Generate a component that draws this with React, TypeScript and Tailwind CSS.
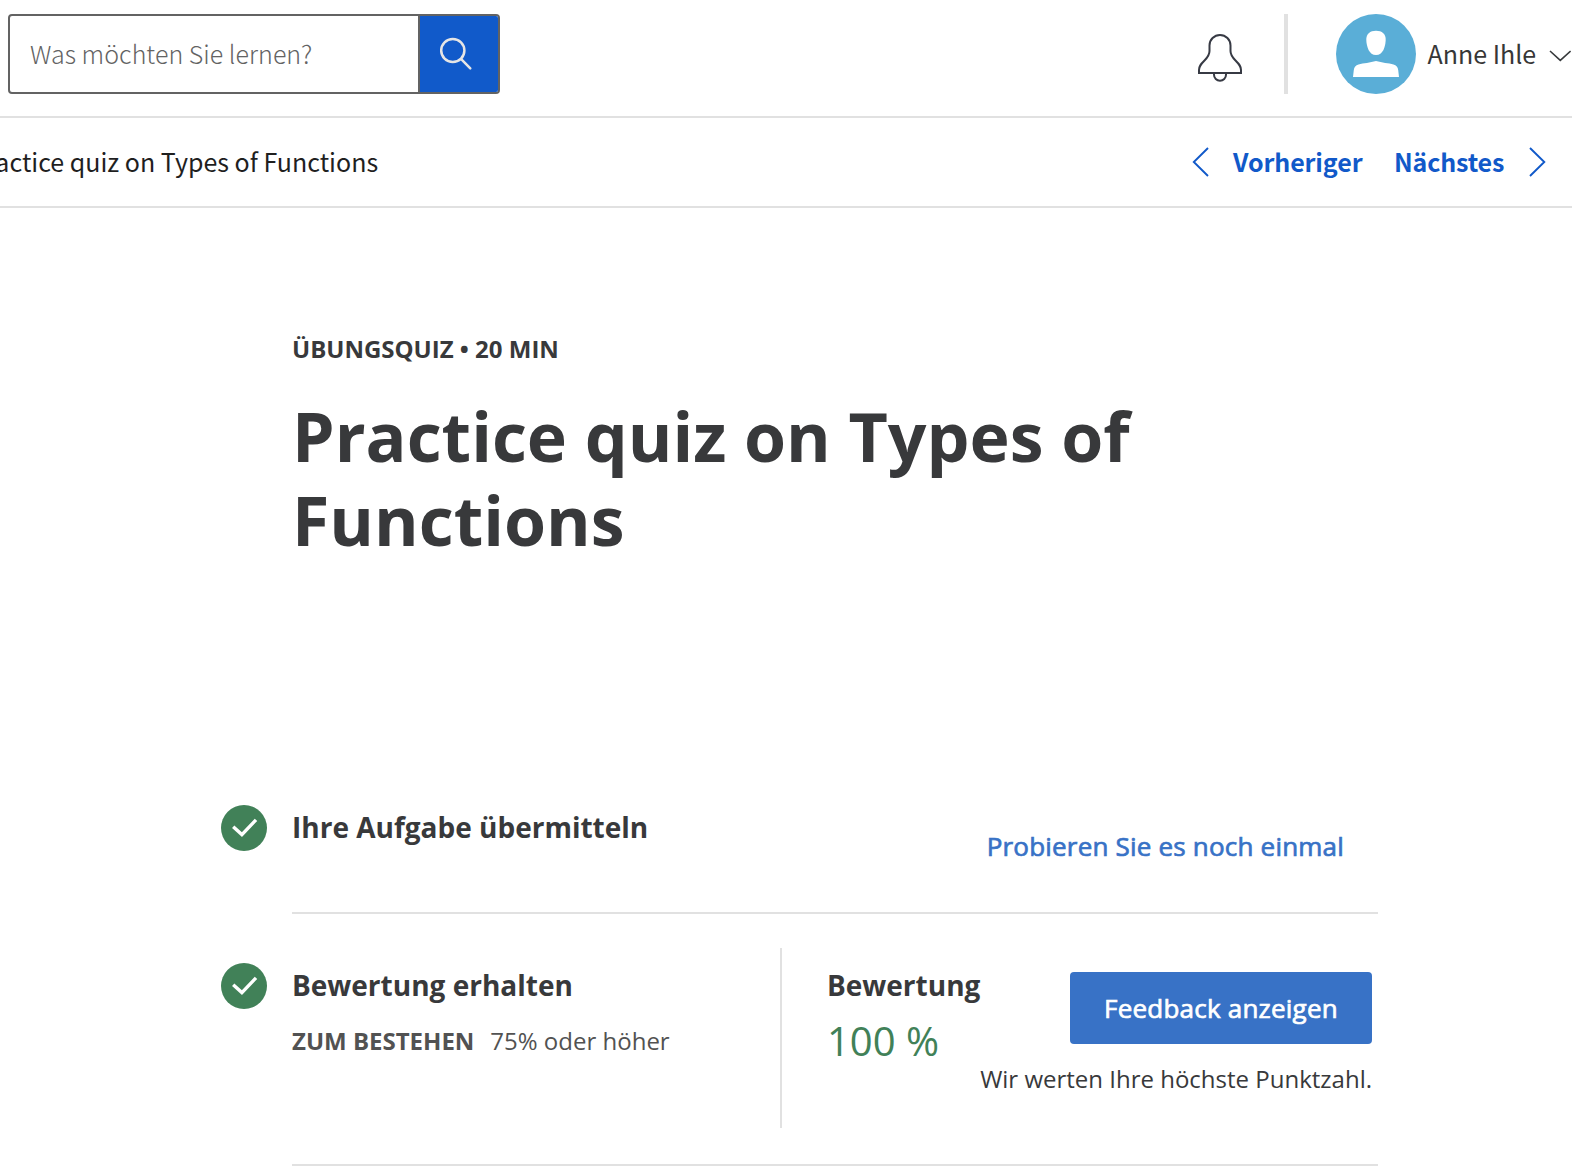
import React from "react";

const sans = "font-['Noto_Sans_CJK_SC',sans-serif]";

function SearchIcon() {
  return (
    <svg width="34" height="34" viewBox="0 0 34 34" fill="none" stroke="#e5e5e5" strokeWidth="2.5">
      <circle cx="13.8" cy="13.5" r="11.6" />
      <path d="M22.2 22.2L31.3 31.4" strokeLinecap="round" />
    </svg>
  );
}

function BellIcon() {
  return (
    <svg width="44" height="48" viewBox="0 0 44 48" fill="none" stroke="#373a44" strokeWidth="2">
      <path d="M1 39V36C1 32 3 30 6.5 26.5C10 23 11.5 21 11.5 17V11.5A10.5 10.5 0 0 1 32.5 11.5V17C32.5 21 34 23 37.5 26.5C41 30 43 32 43 36V39Z" />
      <path d="M16 39V40.8A6 6 0 0 0 28 40.8V39" />
    </svg>
  );
}

function Avatar() {
  return (
    <svg width="80" height="80" viewBox="0 0 80 80" className="shrink-0">
      <circle cx="40" cy="40" r="40" fill="#5aaed7" />
      <path
        fill="#fff"
        d="M40 16.7C46 16.7 50 20 49.7 26C49.3 33 47 41 40 41C33 41 30.7 33 30.3 26C30 20 34 16.7 40 16.7Z"
      />
      <path
        fill="#fff"
        d="M17 63L17.8 56Q18.3 51.6 22.5 50.4C27.5 49.2 34 48.7 40 47C46 48.7 52.5 49.2 57.5 50.4Q61.7 51.6 62.2 56L63 63Z"
      />
    </svg>
  );
}

function StatusCheck() {
  return (
    <svg width="46" height="46" viewBox="0 0 46 46" className="shrink-0">
      <circle cx="23" cy="23" r="23" fill="#418158" />
      <path d="M12.2 21.8L20.9 29.6L35 14.8" fill="none" stroke="#fff" strokeWidth="3.4" />
    </svg>
  );
}

function Header() {
  return (
    <header className="flex h-[118px] items-start border-b-2 border-[#e1e1e1] pt-3.5 pl-2">
      <div className="flex h-20 w-[492px] overflow-hidden rounded-[4px] border-2 border-[#636363]">
        <div className={`${sans} flex flex-1 items-center pb-0.5 pl-5 text-[25px] leading-9 font-light tracking-[0.04px] text-[#636363]`}>
          Was möchten Sie lernen?
        </div>
        <button className="flex w-20 items-center justify-center border-l-2 border-[#636363] bg-[#115aca] pr-1.5">
          <SearchIcon />
        </button>
      </div>
      <div className="ml-[698px] pt-5">
        <BellIcon />
      </div>
      <div className="ml-[42px] h-20 w-1 bg-[#e1e1e1]" />
      <div className="ml-12 flex h-20 items-center">
        <Avatar />
        <span className={`${sans} ml-[11.5px] pb-0.5 text-[25px] leading-9 whitespace-nowrap text-[#373737]`}>Anne Ihle</span>
        <svg width="22" height="12" viewBox="0 0 22 12" className="mt-1 ml-[12.5px] shrink-0" fill="none" stroke="#373a3c" strokeWidth="1.6">
          <path d="M1 1L11.3 10.3L21.6 1" />
        </svg>
      </div>
    </header>
  );
}

function ItemNav() {
  return (
    <nav className={`${sans} flex h-[90px] items-center border-b-2 border-[#e1e1e1] text-[25px] leading-9`}>
      <div className="-ml-[29.5px] w-[1221.5px] pb-0.5 whitespace-nowrap text-[#1f1f1f]">
        Practice quiz on Types of Functions
      </div>
      <a className="flex items-center font-bold text-[#1159c9]">
        <svg width="17" height="30" viewBox="0 0 17 30" fill="none" stroke="currentColor" strokeWidth="1.9">
          <path d="M16 1L1.8 15L16 29" />
        </svg>
        <span className="ml-6 pb-0.5 tracking-[-0.1px]">Vorheriger</span>
      </a>
      <a className="ml-[31.5px] flex items-center font-bold text-[#1159c9]">
        <span className="pb-0.5 tracking-[-0.15px]">Nächstes</span>
        <svg width="17" height="30" viewBox="0 0 17 30" className="ml-[25px]" fill="none" stroke="currentColor" strokeWidth="1.9">
          <path d="M1 1L15.3 15L1 29" />
        </svg>
      </a>
    </nav>
  );
}

export default function App() {
  return (
    <div className="h-[1166px] w-[1572px] overflow-hidden bg-white font-['Open_Sans',sans-serif] text-[#38393b]">
      <Header />
      <ItemNav />
      <main className="w-[1378px] pt-[123px] pl-[221px]">
        <div className="h-[474px] pl-[71px]">
          <p className="text-[24px] leading-[35px] font-bold">ÜBUNGSQUIZ • 20 MIN</p>
          <h1 className="mt-7 w-[900px] text-[68px] leading-[84px] font-bold">
            Practice quiz on Types of Functions
          </h1>
        </div>

        <section className="flex items-start">
          <StatusCheck />
          <div className="ml-[25px] flex h-[109px] flex-1 items-start justify-between border-b-2 border-[#e1e1e1]">
            <h2 className="pt-[3px] text-[28px] leading-[38px] font-bold">Ihre Aufgabe übermitteln</h2>
            <a className="pt-[23px] pr-[34px] text-[26px] leading-9 font-normal tracking-[0.2px] text-[#3872c6] [-webkit-text-stroke:0.7px_currentColor]">
              Probieren Sie es noch einmal
            </a>
          </div>
        </section>

        <section className="flex items-start">
          <div className="pt-[49px]">
            <StatusCheck />
          </div>
          <div className="ml-[25px] flex h-[252px] flex-1 items-start border-b-2 border-[#e1e1e1] pt-[34px]">
            <div className="h-[180px] w-[490px] border-r-2 border-[#e1e1e1] pt-[18px]">
              <h2 className="text-[28px] leading-[38px] font-bold">Bewertung erhalten</h2>
              <div className="mt-5 flex gap-4 text-[24px] leading-[33px] text-[#525252]">
                <span className="font-bold">ZUM BESTEHEN</span>
                <span>75% oder höher</span>
              </div>
            </div>
            <div className="w-[198px] pt-[18px] pl-[45px]">
              <h3 className="text-[28px] leading-[38px] font-bold">Bewertung</h3>
              <div className="mt-[9px] text-[40px] leading-[55px] text-[#418158]">100 %</div>
            </div>
            <div className="flex w-[392px] flex-col items-end pt-6">
              <button className="h-[72px] w-[302px] rounded-[4px] bg-[#3872c6] text-[26px] leading-9 tracking-[0.22px] text-white [-webkit-text-stroke:0.7px_currentColor]">
                Feedback anzeigen
              </button>
              <p className="mt-[18px] text-[24px] leading-[33px] whitespace-nowrap">Wir werten Ihre höchste Punktzahl.</p>
            </div>
          </div>
        </section>
      </main>
    </div>
  );
}
